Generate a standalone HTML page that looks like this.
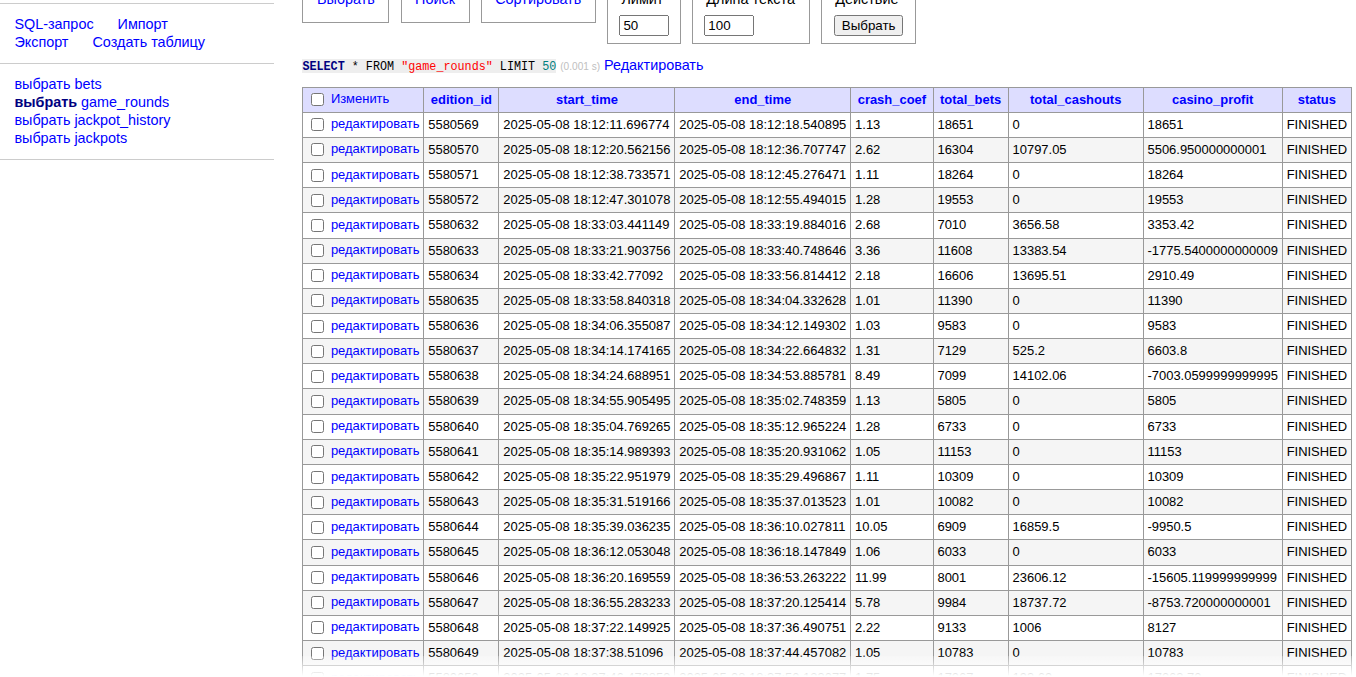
<!DOCTYPE html>
<html lang="ru"><head><meta charset="utf-8"><title>game_rounds</title>
<style>
html,body{margin:0;padding:0;overflow:hidden}
body{color:#000;background:#fff;font:14.4px/1.25 "Liberation Sans",sans-serif;width:1356px;height:677px;position:relative}
a{color:blue;text-decoration:none}
#menu{position:absolute;left:0;top:3px;width:273.6px}
#dbs{height:0;border-bottom:1px solid #ccc}
#menu p,#tables{padding:11.52px 14.4px;margin:0;border-bottom:1px solid #ccc}
#tables{list-style:none;white-space:nowrap}
#tables li{list-style:none}
#tables a.active{font-weight:bold;color:navy}
#menu a{position:relative;top:-1px}
.links a{white-space:nowrap;margin-right:20px}
#content{position:absolute;left:302.4px;top:-22px;width:1500px}
fieldset{display:inline-block;vertical-align:top;padding:7.2px 11.52px;margin:11.52px 7.2px 0 0;border:1px solid #999;min-inline-size:auto}
legend{padding:0 2px}
table{margin:12.5px 20px 0 0;border-collapse:collapse;font-size:12.96px}
td,th{border:1px solid #999;padding:.2em .3em;white-space:pre}
thead th,thead td{background:#ddf;text-align:center;padding:.2em .5em}
thead td{text-align:left;padding:.2em .3em}
.odds tbody tr:nth-child(2n){background:#F5F5F5}
p{margin:11.52px 20px 0 0}
input{vertical-align:middle}
code{background:#eee;font-family:"Liberation Mono",monospace;font-size:11.75px}
.cs{display:inline-block;transform:translateY(0.8px) scaleY(1.15);transform-origin:0 71%}
.dn{position:relative;top:1px}
.time{color:silver;font-size:70%}
.footer{position:absolute;left:0;top:656px;width:1356px;height:21px;background:linear-gradient(rgba(255,255,255,.2),#fff 20px)}
</style></head><body>
<div id="menu">
<div id="dbs"></div>
<p class="links"><a href="#">SQL-запрос</a>
<a href="#">Импорт</a>
<a href="#">Экспорт</a>
<a href="#">Создать таблицу</a></p>
<ul id="tables">
<li><a href="#">выбрать</a> <a href="#">bets</a></li>
<li><a href="#" class="active">выбрать</a> <a href="#">game_rounds</a></li>
<li><a href="#">выбрать</a> <a href="#">jackpot_history</a></li>
<li><a href="#">выбрать</a> <a href="#">jackpots</a></li>
</ul>
</div>
<div id="content">
<form id="form">
<fieldset><legend><a href="#">Выбрать</a></legend></fieldset>
<fieldset><legend><a href="#">Поиск</a></legend></fieldset>
<fieldset><legend><a href="#">Сортировать</a></legend></fieldset>
<fieldset><legend>Лимит</legend><div><input type="number" value="50" style="width:49.6px;box-sizing:border-box;margin-right:-0.9px"></div></fieldset>
<fieldset><legend>Длина текста</legend><div><input type="number" value="100" style="width:49.6px;box-sizing:border-box;margin-right:-0.9px"></div></fieldset>
<fieldset><legend>Действие</legend><div><input type="submit" value="Выбрать" style="width:69px;margin-left:0.6px;margin-right:0.5px"></div></fieldset>
</form>
<p><code class="jush-sql"><span class="cs"><b style="color:navy">SELECT</b> * FROM <span style="color:red">"game_rounds"</span> LIMIT <span style="color:#007F7F">50</span></span></code> <span class="time dn">(0.001 s)</span> <a href="#" class="dn">Редактировать</a></p>
<table class="odds nowrap">
<thead><tr><td><input type="checkbox"> <a href="#">Изменить</a></td><th><a href="#">edition_id</a></th><th><a href="#">start_time</a></th><th><a href="#">end_time</a></th><th><a href="#">crash_coef</a></th><th><a href="#">total_bets</a></th><th style="width:121px"><a href="#">total_cashouts</a></th><th><a href="#">casino_profit</a></th><th><a href="#">status</a></th></tr></thead>
<tbody>
<tr><td><input type="checkbox"> <a href="#">редактировать</a></td><td>5580569</td><td>2025-05-08 18:12:11.696774</td><td>2025-05-08 18:12:18.540895</td><td>1.13</td><td>18651</td><td>0</td><td>18651</td><td>FINISHED</td></tr>
<tr><td><input type="checkbox"> <a href="#">редактировать</a></td><td>5580570</td><td>2025-05-08 18:12:20.562156</td><td>2025-05-08 18:12:36.707747</td><td>2.62</td><td>16304</td><td>10797.05</td><td>5506.950000000001</td><td>FINISHED</td></tr>
<tr><td><input type="checkbox"> <a href="#">редактировать</a></td><td>5580571</td><td>2025-05-08 18:12:38.733571</td><td>2025-05-08 18:12:45.276471</td><td>1.11</td><td>18264</td><td>0</td><td>18264</td><td>FINISHED</td></tr>
<tr><td><input type="checkbox"> <a href="#">редактировать</a></td><td>5580572</td><td>2025-05-08 18:12:47.301078</td><td>2025-05-08 18:12:55.494015</td><td>1.28</td><td>19553</td><td>0</td><td>19553</td><td>FINISHED</td></tr>
<tr><td><input type="checkbox"> <a href="#">редактировать</a></td><td>5580632</td><td>2025-05-08 18:33:03.441149</td><td>2025-05-08 18:33:19.884016</td><td>2.68</td><td>7010</td><td>3656.58</td><td>3353.42</td><td>FINISHED</td></tr>
<tr><td><input type="checkbox"> <a href="#">редактировать</a></td><td>5580633</td><td>2025-05-08 18:33:21.903756</td><td>2025-05-08 18:33:40.748646</td><td>3.36</td><td>11608</td><td>13383.54</td><td>-1775.5400000000009</td><td>FINISHED</td></tr>
<tr><td><input type="checkbox"> <a href="#">редактировать</a></td><td>5580634</td><td>2025-05-08 18:33:42.77092</td><td>2025-05-08 18:33:56.814412</td><td>2.18</td><td>16606</td><td>13695.51</td><td>2910.49</td><td>FINISHED</td></tr>
<tr><td><input type="checkbox"> <a href="#">редактировать</a></td><td>5580635</td><td>2025-05-08 18:33:58.840318</td><td>2025-05-08 18:34:04.332628</td><td>1.01</td><td>11390</td><td>0</td><td>11390</td><td>FINISHED</td></tr>
<tr><td><input type="checkbox"> <a href="#">редактировать</a></td><td>5580636</td><td>2025-05-08 18:34:06.355087</td><td>2025-05-08 18:34:12.149302</td><td>1.03</td><td>9583</td><td>0</td><td>9583</td><td>FINISHED</td></tr>
<tr><td><input type="checkbox"> <a href="#">редактировать</a></td><td>5580637</td><td>2025-05-08 18:34:14.174165</td><td>2025-05-08 18:34:22.664832</td><td>1.31</td><td>7129</td><td>525.2</td><td>6603.8</td><td>FINISHED</td></tr>
<tr><td><input type="checkbox"> <a href="#">редактировать</a></td><td>5580638</td><td>2025-05-08 18:34:24.688951</td><td>2025-05-08 18:34:53.885781</td><td>8.49</td><td>7099</td><td>14102.06</td><td>-7003.0599999999995</td><td>FINISHED</td></tr>
<tr><td><input type="checkbox"> <a href="#">редактировать</a></td><td>5580639</td><td>2025-05-08 18:34:55.905495</td><td>2025-05-08 18:35:02.748359</td><td>1.13</td><td>5805</td><td>0</td><td>5805</td><td>FINISHED</td></tr>
<tr><td><input type="checkbox"> <a href="#">редактировать</a></td><td>5580640</td><td>2025-05-08 18:35:04.769265</td><td>2025-05-08 18:35:12.965224</td><td>1.28</td><td>6733</td><td>0</td><td>6733</td><td>FINISHED</td></tr>
<tr><td><input type="checkbox"> <a href="#">редактировать</a></td><td>5580641</td><td>2025-05-08 18:35:14.989393</td><td>2025-05-08 18:35:20.931062</td><td>1.05</td><td>11153</td><td>0</td><td>11153</td><td>FINISHED</td></tr>
<tr><td><input type="checkbox"> <a href="#">редактировать</a></td><td>5580642</td><td>2025-05-08 18:35:22.951979</td><td>2025-05-08 18:35:29.496867</td><td>1.11</td><td>10309</td><td>0</td><td>10309</td><td>FINISHED</td></tr>
<tr><td><input type="checkbox"> <a href="#">редактировать</a></td><td>5580643</td><td>2025-05-08 18:35:31.519166</td><td>2025-05-08 18:35:37.013523</td><td>1.01</td><td>10082</td><td>0</td><td>10082</td><td>FINISHED</td></tr>
<tr><td><input type="checkbox"> <a href="#">редактировать</a></td><td>5580644</td><td>2025-05-08 18:35:39.036235</td><td>2025-05-08 18:36:10.027811</td><td>10.05</td><td>6909</td><td>16859.5</td><td>-9950.5</td><td>FINISHED</td></tr>
<tr><td><input type="checkbox"> <a href="#">редактировать</a></td><td>5580645</td><td>2025-05-08 18:36:12.053048</td><td>2025-05-08 18:36:18.147849</td><td>1.06</td><td>6033</td><td>0</td><td>6033</td><td>FINISHED</td></tr>
<tr><td><input type="checkbox"> <a href="#">редактировать</a></td><td>5580646</td><td>2025-05-08 18:36:20.169559</td><td>2025-05-08 18:36:53.263222</td><td>11.99</td><td>8001</td><td>23606.12</td><td>-15605.119999999999</td><td>FINISHED</td></tr>
<tr><td><input type="checkbox"> <a href="#">редактировать</a></td><td>5580647</td><td>2025-05-08 18:36:55.283233</td><td>2025-05-08 18:37:20.125414</td><td>5.78</td><td>9984</td><td>18737.72</td><td>-8753.720000000001</td><td>FINISHED</td></tr>
<tr><td><input type="checkbox"> <a href="#">редактировать</a></td><td>5580648</td><td>2025-05-08 18:37:22.149925</td><td>2025-05-08 18:37:36.490751</td><td>2.22</td><td>9133</td><td>1006</td><td>8127</td><td>FINISHED</td></tr>
<tr><td><input type="checkbox"> <a href="#">редактировать</a></td><td>5580649</td><td>2025-05-08 18:37:38.51096</td><td>2025-05-08 18:37:44.457082</td><td>1.05</td><td>10783</td><td>0</td><td>10783</td><td>FINISHED</td></tr>
<tr><td><input type="checkbox"> <a href="#">редактировать</a></td><td>5580650</td><td>2025-05-08 18:37:46.478859</td><td>2025-05-08 18:37:50.123077</td><td>1.75</td><td>17067</td><td>193.69</td><td>17063.70</td><td>FINISHED</td></tr>
<tr><td><input type="checkbox"> <a href="#">редактировать</a></td><td>5580651</td><td>2025-05-08 18:37:52.145032</td><td>2025-05-08 18:37:58.221354</td><td>1.22</td><td>12001</td><td>0</td><td>12001</td><td>FINISHED</td></tr>
</tbody></table>
</div>
<div class="footer"></div>
</body></html>
